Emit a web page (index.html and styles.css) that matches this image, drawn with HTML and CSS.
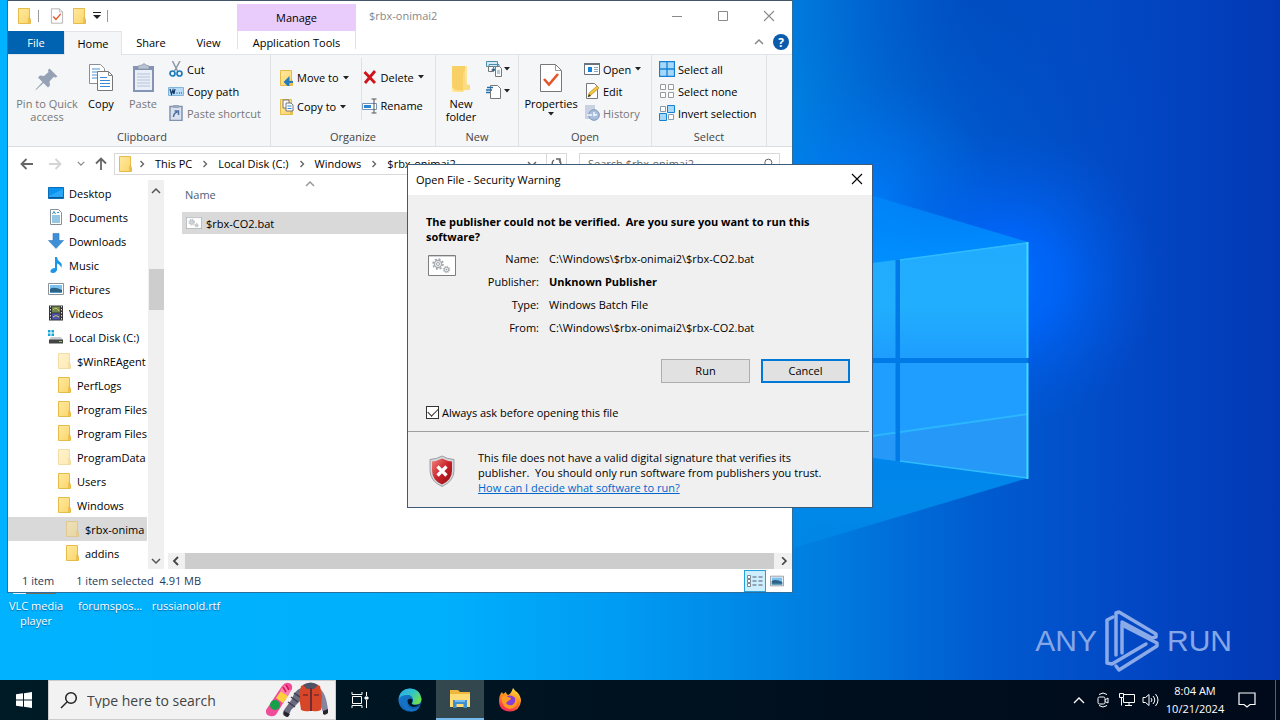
FILE: index.html
```html
<!DOCTYPE html>
<html lang="en">
<head>
<meta charset="utf-8">
<title>$rbx-onimai2</title>
<link rel="stylesheet" href="styles.css">
</head>
<body>
<svg class="defs" aria-hidden="true">
  <defs>
    <linearGradient id="gFolder" x1="0" y1="0" x2="1" y2="1"><stop offset="0" stop-color="#ffeaa0"/><stop offset="1" stop-color="#fbd468"/></linearGradient>
    <linearGradient id="gShield" x1="0" y1="0" x2="1" y2="1"><stop offset="0" stop-color="#f0837b"/><stop offset=".5" stop-color="#c9222a"/><stop offset="1" stop-color="#8d0f14"/></linearGradient>
    <linearGradient id="gEdge" x1="0" y1="0" x2="1" y2=".6"><stop offset="0" stop-color="#2aa8e8"/><stop offset=".55" stop-color="#32c4c8"/><stop offset="1" stop-color="#6adf52"/></linearGradient>
    <linearGradient id="gEdgeB" x1="0" y1="0" x2="1" y2="1"><stop offset="0" stop-color="#1b86dc"/><stop offset="1" stop-color="#0b4b9c"/></linearGradient>
    <linearGradient id="gFox" x1=".7" y1="0" x2=".3" y2="1"><stop offset="0" stop-color="#ffe13c"/><stop offset=".45" stop-color="#ff8a1e"/><stop offset="1" stop-color="#f5245c"/></linearGradient>
    <symbol id="folder" viewBox="0 0 16 16"><path d="M2.500.5h11v9.500l1 1.500v4h-12z" fill="url(#gFolder)" stroke="#e6bb4a"/><path d="M13 9.500v5.500" stroke="#d9a93a" fill="none"/></symbol>
    <symbol id="chev-r" viewBox="0 0 8 8"><path d="M2.500 1l3 3-3 3" fill="none" stroke="currentColor" stroke-width="1.400"/></symbol>
    <symbol id="chev-u" viewBox="0 0 10 8"><path d="M1 6l4-4 4 4" fill="none" stroke="currentColor" stroke-width="1.500"/></symbol>
    <symbol id="chev-d" viewBox="0 0 10 8"><path d="M1 2l4 4 4-4" fill="none" stroke="currentColor" stroke-width="1.500"/></symbol>
    <symbol id="chev-l" viewBox="0 0 8 10"><path d="M6 1L2 5l4 4" fill="none" stroke="currentColor" stroke-width="1.800"/></symbol>
    <symbol id="drop" viewBox="0 0 6 4"><path d="M0 0h6L3 3.500z" fill="#222"/></symbol>
    <symbol id="x" viewBox="0 0 12 12"><path d="M1 1l10 10M11 1L1 11" fill="none" stroke="currentColor" stroke-width="1.100"/></symbol>
    <symbol id="check-doc" viewBox="0 0 24 30"><path d="M1.500 1.500h15l6 6v21h-21z" fill="#fff" stroke="#777"/><path d="M16.500 1.500v6h6" fill="none" stroke="#999"/><path d="M5 16l5 5.500L19 11" fill="none" stroke="#e2562a" stroke-width="2.600"/></symbol>
    <symbol id="pin" viewBox="0 0 32 32"><path d="M18.500 5.500l8 8-2 1-2-.5-4 4.500.5 4-2 2-4.500-4.500L5 27l-.500-.500 7-7.500L7 14.500l2-2 4 .5 4.500-4-.5-2z" fill="#95a2b6"/></symbol>
    <symbol id="copy" viewBox="0 0 32 32"><path d="M4.500 1.500h11l4 4v15h-15z" fill="#fff" stroke="#8a8f96"/><path d="M7 6h8M7 9h10M7 12h10M7 15h10" stroke="#4d94dc" stroke-width="1.200"/><path d="M12.500 8.500h11l4 4v15h-15z" fill="#fff" stroke="#777"/><path d="M23.500 8.500v4h4" fill="none" stroke="#888"/><path d="M15 14.500h7M15 17.500h10M15 20.500h10M15 23.500h10" stroke="#3a86d8" stroke-width="1.200"/></symbol>
    <symbol id="paste" viewBox="0 0 32 32"><path d="M6 3h21v26H6z" fill="#8494b4"/><path d="M8 7h17v20H8z" fill="#e9eef7"/><path d="M10 11h13M10 14h13M10 17h13M10 20h13M10 23h13" stroke="#b5c1d8"/><path d="M11 6V3l4-1q2-3 4 0l3 1v3z" fill="#b9c2d2" stroke="#8792a8" stroke-width=".7"/></symbol>
    <symbol id="cut" viewBox="0 0 16 16"><path d="M4.500 0L10 11M12 0L6 11" stroke="#8a98a8" stroke-width="1.500"/><circle cx="4.500" cy="12.500" r="2.500" fill="none" stroke="#1c7dbd" stroke-width="1.700"/><circle cx="11.500" cy="12.500" r="2.500" fill="none" stroke="#1c7dbd" stroke-width="1.700"/></symbol>
    <symbol id="path" viewBox="0 0 16 16"><path d="M.5 4.500h15v8H.5z" fill="#b9dcf6" stroke="#7fb4dc"/><path d="M2 6l1.500 5L5 7l1 4L7 6M8.500 10h1M11 10h1M13 10h1" stroke="#123a66" stroke-width="1.200" fill="none"/></symbol>
    <symbol id="pshort" viewBox="0 0 16 16"><path d="M2 1.500h12v14H2z" fill="#d9e1ef" stroke="#8292b0" stroke-width="1.500"/><path d="M5 0h6v3H5z" fill="#9aa6bc"/><path d="M5.500 12q0-4 4-5M6.500 6h4v4" fill="none" stroke="#5370a4" stroke-width="1.500"/></symbol>
    <symbol id="moveto" viewBox="0 0 16 16"><use href="#folder"/><path d="M15 12H8M10.500 8.500L7 12l3.500 3.500z" stroke="#237cbf" stroke-width="2" fill="#237cbf"/></symbol>
    <symbol id="copyto" viewBox="0 0 16 16"><use href="#folder"/><path d="M5 1h6v8H5z" fill="#fff" stroke="#777"/><path d="M8 4h5l2 2v6H8z" fill="#fff" stroke="#777"/><path d="M9.500 7h4M9.500 9.500h4" stroke="#3a86d8"/></symbol>
    <symbol id="delete" viewBox="0 0 16 16"><path d="M2.500 3L13 14M13 2L3 14" stroke="#d0141c" stroke-width="2.800"/></symbol>
    <symbol id="rename" viewBox="0 0 16 16"><path d="M.5 5.500h14v6H.5z" fill="#fff" stroke="#7895b4"/><path d="M2 7h7v3H2z" fill="#2b85d0"/><path d="M9.500 1h5M9.500 15h5M12 1v14" stroke="#555"/></symbol>
    <symbol id="newfolder" viewBox="0 0 32 32"><path d="M7 3h15v22l-4 4H7z" fill="#ffe69a"/><path d="M7 3h13v5q0 2-2 3v17l-8-1-3-3z" fill="#f8d066"/><path d="M20 7l1 14 4 1v5H10l8 2V11z" fill="#fbdc82"/></symbol>
    <symbol id="newitem" viewBox="0 0 16 16"><path d="M.5.5h11v5H.5zM3 3.500h10v6H3z" fill="#d8ecf8" stroke="#4c8cab"/><path d="M2.500 5.500h5v5h-5zM9.500 5.500h4l2 2v8h-6z" fill="#f9f9f9" stroke="#777"/><path d="M6 10V8h4M11 10h3M11 12h3" stroke="#6a9cc4"/></symbol>
    <symbol id="easy" viewBox="0 0 16 16"><path d="M4.500 2.500h7l3 3v10h-10z" fill="#fff" stroke="#777"/><path d="M1 4.500h6M0 7h6M0 9.500h4" stroke="#236fae" stroke-width="1.400"/></symbol>
    <symbol id="open" viewBox="0 0 16 16"><path d="M.5 2.500h15v11H.5z" fill="#fff" stroke="#68717b"/><path d="M0 2h16v2H0z" fill="#69737e"/><path d="M4 6h4v5H4z" fill="#1682d8"/><path d="M10 6.500h4M10 8.500h4M10 10.500h4" stroke="#8aa9c0"/></symbol>
    <symbol id="edit" viewBox="0 0 16 16"><path d="M2.500.5h8l3 3v12h-11z" fill="#fff" stroke="#777"/><path d="M4 14l1-4 8-7 2 2-8 7z" fill="#f3c63a" stroke="#a58320" stroke-width=".6"/><path d="M4 14l1-3 2 2z" fill="#333"/></symbol>
    <symbol id="history" viewBox="0 0 16 16"><path d="M1 0h10v14H1z" fill="#c8d2e2"/><circle cx="10" cy="10" r="5.300" fill="#a9bddc" stroke="#7d94b8"/><path d="M10 7v3.500l3-1M3 10h5" fill="none" stroke="#f3f6fc" stroke-width="1.600"/></symbol>
    <symbol id="selall" viewBox="0 0 16 16"><path d="M.5.5h15v15H.5zM8 .5v15M.5 8h15" fill="#a6d8fa" stroke="#1581d4" stroke-width="1.300"/></symbol>
    <symbol id="selnone" viewBox="0 0 16 16"><path d="M1.500 1.500h5v5h-5zM9.500 1.500h5v5h-5zM1.500 9.500h5v5h-5zM9.500 9.500h5v5h-5z" fill="#fff" stroke="#9a9a9a"/></symbol>
    <symbol id="selinv" viewBox="0 0 16 16"><path d="M1.500 1.500h5v5h-5zM9.500 9.500h5v5h-5z" fill="#fff" stroke="#8a9aa8"/><path d="M8.500.5h7v7h-7zM.5 8.500h7v7h-7z" fill="#a6d8fa" stroke="#1581d4"/></symbol>
    <symbol id="desktop" viewBox="0 0 16 16"><path d="M.5 2.500h15v11H.5z" fill="#0a93ee" stroke="#0b6cb8"/><path d="M1 11l14-7v9H1z" fill="#2aa7f8"/><path d="M1 12.500h14" stroke="#0a5590"/></symbol>
    <symbol id="document" viewBox="0 0 16 16"><path d="M2.500.5h8l3 3v12h-11z" fill="#fff" stroke="#8a8f94"/><path d="M4.500 5L6 2.500 7.500 5M9 3.500h2M4 7h8M4 9h8M4 11h8M4 13h8" stroke="#2b8ec4" fill="none"/></symbol>
    <symbol id="download" viewBox="0 0 16 16"><path d="M5 .5h6v7h4.500L8 15.500.5 7.500H5z" fill="#3f8fd8" stroke="#2e79bf" stroke-width=".6"/></symbol>
    <symbol id="music" viewBox="0 0 16 16"><path d="M7 0h2q0 3 3 5t1 6q0-3-4-4.500V13q-1 3-4 3t-2.500-2.500Q3.500 11 7 11z" fill="#1c96e8"/></symbol>
    <symbol id="picture" viewBox="0 0 16 16"><path d="M.5 2.500h15v11H.5z" fill="#fff" stroke="#8b9299"/><path d="M2 4h12v8H2z" fill="#7cc1ee"/><path d="M2 8q4-3 12 1v3H2z" fill="#2c6286"/><path d="M2 11h12v1H2z" fill="#5699bd"/></symbol>
    <symbol id="video" viewBox="0 0 16 16"><path d="M1 .5h14v15H1z" fill="#333"/><path d="M4 1.500h8v6H4z" fill="#6f8752"/><path d="M4 8.500h8v6H4z" fill="#4c55ae"/><path d="M5 5q3-4 6 1M5 12q3-3 6 0" stroke="#dfc85a" fill="none"/><path d="M2.500 1v15M13.500 1v15" stroke="#ddd" stroke-dasharray="1.500 1.500"/></symbol>
    <symbol id="disk" viewBox="0 0 16 16"><path d="M0 1h2.500v2.500H0zM3.500 1H6v2.500H3.500zM0 4.500h2.500V7H0zM3.500 4.500H6V7H3.500z" fill="#17a5d8"/><path d="M3 8h10l2 3H1z" fill="#c9cccf"/><path d="M1 10.500h14v4H1z" fill="#444"/><path d="M11 12.500h3" stroke="#6fd04a"/></symbol>
    <symbol id="bat" viewBox="0 0 28 21"><path d="M.5.5h27v20H.5z" fill="#fff" stroke="#7c7f82"/><path d="M1 1h26v1H1z" fill="#cfd2d5"/><circle cx="10" cy="9" r="3.600" fill="#eee" stroke="#a0a7ad" stroke-width="1.200"/><circle cx="10" cy="9" r="5" fill="none" stroke="#a0a7ad" stroke-width="1.500" stroke-dasharray="2 1.930"/><circle cx="10" cy="9" r="1.500" fill="#fff" stroke="#a0a7ad"/><circle cx="18.500" cy="14.500" r="2.300" fill="#eee" stroke="#a0a7ad"/><circle cx="18.500" cy="14.500" r="3.200" fill="none" stroke="#a0a7ad" stroke-dasharray="1.300 1.200"/><circle cx="18.500" cy="14.500" r=".8" fill="#8f969c"/></symbol>
    <symbol id="details" viewBox="0 0 18 14"><path d="M1.500 1.500h3v3h-3zM1.500 5.500h3v3h-3zM1.500 9.500h3v3h-3z" fill="#fff" stroke="#7d8790"/><path d="M6.500 3h4M12.500 3h4M6.500 7h4M12.500 7h4M6.500 11h4M12.500 11h4" stroke="#555f68"/></symbol>
    <symbol id="mag" viewBox="0 0 18 18"><circle cx="11" cy="7" r="5.300" fill="none" stroke="currentColor" stroke-width="1.500"/><path d="M7 11L1 17" stroke="currentColor" stroke-width="1.500"/></symbol>
    <symbol id="shield" viewBox="0 0 28 32"><path d="M14 1q5 3 12 3.500v11Q26 26 14 31.500 2 26 2 15.500v-11Q9 4 14 1z" fill="#d5d8db" stroke="#888e94" stroke-width=".8"/><path d="M14 3.500q5 2.500 10 3v9Q24 25 14 29.500 4 25 4 15.500v-9q5-.5 10-3z" fill="url(#gShield)"/><path d="M9.500 11.500l9 9M18.500 11.500l-9 9" stroke="#fff" stroke-width="3.200"/></symbol>
  </defs>
</svg>

<main class="desktop">
  <svg class="wallpaper" viewBox="0 0 1280 680" preserveAspectRatio="xMidYMid slice" aria-hidden="true">
    <defs>
      <linearGradient id="wBase" gradientUnits="userSpaceOnUse" x1="0" y1="0" x2="1280" y2="0"><stop offset="0" stop-color="#00b2ff"/><stop offset=".34" stop-color="#00b0fd"/><stop offset=".48" stop-color="#009cf3"/><stop offset=".64" stop-color="#007ee0"/><stop offset=".77" stop-color="#005bd0"/><stop offset=".88" stop-color="#0248c5"/><stop offset="1" stop-color="#0338b4"/></linearGradient>
      <radialGradient id="wGlow" gradientUnits="userSpaceOnUse" cx="1010" cy="280" r="150"><stop offset="0" stop-color="#006cff"/><stop offset=".35" stop-color="#0066fc" stop-opacity=".8"/><stop offset="1" stop-color="#0058e0" stop-opacity="0"/></radialGradient>
      <radialGradient id="wHaze" gradientUnits="userSpaceOnUse" cx="870" cy="210" r="130"><stop offset="0" stop-color="#007cff" stop-opacity=".8"/><stop offset="1" stop-color="#006cf0" stop-opacity="0"/></radialGradient>
      <radialGradient id="wDark" gradientUnits="userSpaceOnUse" cx="970" cy="0" r="220"><stop offset="0" stop-color="#0040b4" stop-opacity=".55"/><stop offset="1" stop-color="#0040b4" stop-opacity="0"/></radialGradient>
      <linearGradient id="wPane" x1="0" y1="0" x2="0" y2="1"><stop offset="0" stop-color="#22abff"/><stop offset=".55" stop-color="#21aefd"/><stop offset="1" stop-color="#1e9eff"/></linearGradient>
      <linearGradient id="wBeam" gradientUnits="userSpaceOnUse" x1="0" y1="168" x2="0" y2="552"><stop offset="0" stop-color="#0088f8" stop-opacity=".5"/><stop offset=".25" stop-color="#0090ff"/><stop offset=".75" stop-color="#0085ec"/><stop offset=".9" stop-color="#0088e8"/><stop offset="1" stop-color="#008ae6" stop-opacity=".6"/></linearGradient>
    </defs>
    <rect width="1280" height="680" fill="url(#wBase)"/>
    <rect width="1280" height="680" fill="url(#wDark)"/>
    <rect width="1280" height="680" fill="url(#wHaze)"/>
    <rect width="1280" height="680" fill="url(#wGlow)"/>
    <path d="M780 168L1028 242V478L780 552z" fill="url(#wBeam)"/>
    <path d="M790 273l106-13v98H790zM900 260l128-18v116H900z" fill="url(#wPane)"/>
    <path d="M790 363h106v98l-106-14zM900 363h128v115l-128-17z" fill="#209eff"/>
    <path d="M790 448l238-35v65l-128-17-110-14z" fill="#2796f6" opacity=".8"/>
    <path d="M872 436l156-22" stroke="#2bb6ff" stroke-width="2"/>
    <path d="M900 260l128-17M1028 478l-128-17" fill="none" stroke="#2fbcff" stroke-width="1.500"/>
    <path d="M1027.500 242v116M1027.500 363v116" fill="none" stroke="#3fdcff" stroke-width="2"/>
    <path d="M895.500 260h4.500v201h-4.500zM790 358h238v5H790z" fill="#007ae6"/>
    <path d="M13 590h13v4H13z" fill="#e8eef2"/><path d="M26 590h30v4H26z" fill="#7a6a55"/>
  </svg>

  <ul class="shortcuts">
    <li>VLC media player</li><li>forumspos...</li><li>russianold.rtf</li>
  </ul>

  <div class="anyrun" aria-label="ANY.RUN">
    <span>ANY</span>
    <svg width="54" height="62" viewBox="0 0 54 62" fill="none" stroke="#8aaae8" stroke-width="3.500" stroke-linejoin="round" stroke-linecap="round" aria-hidden="true"><path d="M8 7L2 10v43l5 1 34-20"/><path d="M11 45V3l3-1 37 22v3l-4 1L17 12"/><path d="M17 14v29"/><path d="M11 56l3 4 38-24v-3L19 16"/></svg>
    <span>RUN</span>
  </div>

  <section class="window explorer" aria-label="$rbx-onimai2">
    <header class="caption">
      <div class="quick">
        <svg class="i16"><use href="#folder"/></svg><i class="tick"></i>
        <svg class="i16"><use href="#check-doc"/></svg>
        <svg class="i16"><use href="#folder"/></svg>
        <svg width="8" height="8" viewBox="0 0 8 8"><path d="M0 .5h8" stroke="#222"/><path d="M0 3h8L4 7z" fill="#222"/></svg><i class="tick"></i>
      </div>
      <div class="manage">Manage</div>
      <h1 class="title">$rbx-onimai2</h1>
      <div class="winbtns">
        <button aria-label="Minimize"><svg width="12" height="12"><path d="M1 6.500h10" stroke="#8a8a8a"/></svg></button>
        <button aria-label="Maximize"><svg width="12" height="12"><path d="M1.500 1.500h9v9h-9z" fill="none" stroke="#8a8a8a"/></svg></button>
        <button aria-label="Close"><svg width="12" height="12"><use href="#x"/></svg></button>
      </div>
    </header>
    <nav class="tabs">
      <button class="tab file">File</button><button class="tab home">Home</button><button class="tab share">Share</button><button class="tab view">View</button><button class="tab apptools">Application Tools</button>
      <div class="help"><svg width="10" height="8"><use href="#chev-u"/></svg><button class="q" aria-label="Help">?</button></div>
    </nav>
    <div class="ribbon">
      <div class="group clipboard">
        <div class="tools">
          <button class="big pinb off"><svg class="i32"><use href="#pin"/></svg>Pin to Quick access</button>
          <button class="big"><svg class="i32"><use href="#copy"/></svg>Copy</button>
          <button class="big off"><svg class="i32"><use href="#paste"/></svg>Paste</button>
          <div class="rows">
            <button class="small"><svg class="i16"><use href="#cut"/></svg>Cut</button>
            <button class="small"><svg class="i16"><use href="#path"/></svg>Copy path</button>
            <button class="small off"><svg class="i16"><use href="#pshort"/></svg>Paste shortcut</button>
          </div>
        </div>
        <div class="glabel">Clipboard</div>
      </div>
      <div class="group organize">
        <div class="tools">
          <div class="rows tall">
            <button class="small"><svg class="i16"><use href="#moveto"/></svg>Move to<svg class="dd"><use href="#drop"/></svg></button>
            <button class="small"><svg class="i16"><use href="#copyto"/></svg>Copy to<svg class="dd"><use href="#drop"/></svg></button>
          </div>
          <div class="rows tall split">
            <button class="small"><svg class="i16"><use href="#delete"/></svg>Delete<svg class="dd"><use href="#drop"/></svg></button>
            <button class="small"><svg class="i16"><use href="#rename"/></svg>Rename</button>
          </div>
        </div>
        <div class="glabel">Organize</div>
      </div>
      <div class="group new">
        <div class="tools">
          <button class="big"><svg class="i32"><use href="#newfolder"/></svg>New folder</button>
          <div class="rows">
            <button class="small" aria-label="New item"><svg class="i16"><use href="#newitem"/></svg><svg class="dd"><use href="#drop"/></svg></button>
            <button class="small" aria-label="Easy access"><svg class="i16"><use href="#easy"/></svg><svg class="dd"><use href="#drop"/></svg></button>
          </div>
        </div>
        <div class="glabel">New</div>
      </div>
      <div class="group opens">
        <div class="tools">
          <button class="big props"><svg class="i32 doc"><use href="#check-doc"/></svg>Properties<svg class="dd"><use href="#drop"/></svg></button>
          <div class="rows">
            <button class="small"><svg class="i16"><use href="#open"/></svg>Open<svg class="dd"><use href="#drop"/></svg></button>
            <button class="small"><svg class="i16"><use href="#edit"/></svg>Edit</button>
            <button class="small off"><svg class="i16"><use href="#history"/></svg>History</button>
          </div>
        </div>
        <div class="glabel">Open</div>
      </div>
      <div class="group select">
        <div class="tools">
          <div class="rows">
            <button class="small"><svg class="i16"><use href="#selall"/></svg>Select all</button>
            <button class="small"><svg class="i16"><use href="#selnone"/></svg>Select none</button>
            <button class="small"><svg class="i16"><use href="#selinv"/></svg>Invert selection</button>
          </div>
        </div>
        <div class="glabel">Select</div>
      </div>
    </div>
    <div class="address">
      <div class="arrows">
        <svg width="14" height="12" viewBox="0 0 14 12" fill="none" stroke="#666" stroke-width="1.800"><path d="M13 6H2M6.500 1L1.500 6l5 5"/></svg>
        <svg width="14" height="12" viewBox="0 0 14 12" fill="none" stroke="#d4d4d4" stroke-width="1.800"><path d="M1 6h11M7.500 1l5 5-5 5"/></svg>
        <svg class="recent" width="8" height="7"><use href="#chev-d"/></svg>
        <svg width="12" height="14" viewBox="0 0 12 14" fill="none" stroke="#666" stroke-width="1.800"><path d="M6 13V2M1 6.500l5-5 5 5"/></svg>
      </div>
      <div class="crumbs">
        <svg class="i16"><use href="#folder"/></svg>
        <svg class="i8"><use href="#chev-r"/></svg><span>This PC</span>
        <svg class="i8"><use href="#chev-r"/></svg><span>Local Disk (C:)</span>
        <svg class="i8"><use href="#chev-r"/></svg><span>Windows</span>
        <svg class="i8"><use href="#chev-r"/></svg><span>$rbx-onimai2</span>
        <svg class="cend" width="10" height="8"><use href="#chev-d"/></svg>
        <span class="refresh"><svg width="11" height="11" viewBox="0 0 11 11" fill="none" stroke="#666" stroke-width="1.500"><path d="M3 2a4.300 4.300 0 1 0 5 0M5 1h4v4"/></svg></span>
      </div>
      <label class="search"><input type="text" placeholder="Search $rbx-onimai2" aria-label="Search $rbx-onimai2"><svg width="12" height="12"><use href="#mag"/></svg></label>
    </div>
    <div class="body">
      <ul class="tree">
        <li><svg class="i16"><use href="#desktop"/></svg>Desktop</li>
        <li><svg class="i16"><use href="#document"/></svg>Documents</li>
        <li><svg class="i16"><use href="#download"/></svg>Downloads</li>
        <li><svg class="i16"><use href="#music"/></svg>Music</li>
        <li><svg class="i16"><use href="#picture"/></svg>Pictures</li>
        <li><svg class="i16"><use href="#video"/></svg>Videos</li>
        <li><svg class="i16"><use href="#disk"/></svg>Local Disk (C:)</li>
        <li class="l1 faint"><svg class="i16"><use href="#folder"/></svg>$WinREAgent</li>
        <li class="l1"><svg class="i16"><use href="#folder"/></svg>PerfLogs</li>
        <li class="l1"><svg class="i16"><use href="#folder"/></svg>Program Files</li>
        <li class="l1"><svg class="i16"><use href="#folder"/></svg>Program Files</li>
        <li class="l1 faint"><svg class="i16"><use href="#folder"/></svg>ProgramData</li>
        <li class="l1"><svg class="i16"><use href="#folder"/></svg>Users</li>
        <li class="l1"><svg class="i16"><use href="#folder"/></svg>Windows</li>
        <li class="l2 faint sel"><svg class="i16"><use href="#folder"/></svg>$rbx-onima</li>
        <li class="l2"><svg class="i16"><use href="#folder"/></svg>addins</li>
      </ul>
      <div class="vscroll"><svg width="10" height="8"><use href="#chev-u"/></svg><i class="vthumb"></i><svg width="10" height="8"><use href="#chev-d"/></svg></div>
      <div class="files">
        <table>
          <thead><tr><th>Name<svg class="sort" width="10" height="8"><use href="#chev-u"/></svg></th></tr></thead>
          <tbody><tr><td><span class="fname"><svg width="16" height="12"><use href="#bat"/></svg>$rbx-CO2.bat</span></td></tr></tbody>
        </table>
        <div class="hscroll"><svg width="8" height="10"><use href="#chev-l"/></svg><i class="hthumb"></i><svg width="10" height="10"><use href="#chev-r"/></svg></div>
      </div>
    </div>
    <footer class="status"><span>1 item</span><span>1 item selected&nbsp; 4.91 MB</span>
      <div class="views"><button class="on" aria-label="Details"><svg width="18" height="14"><use href="#details"/></svg></button><button aria-label="Large icons"><svg width="14" height="14"><use href="#picture"/></svg></button></div>
    </footer>
  </section>

  <section class="window dialog" role="dialog" aria-labelledby="dt">
    <header class="dhead"><h2 id="dt">Open File - Security Warning</h2><button aria-label="Close"><svg width="12" height="12"><use href="#x"/></svg></button></header>
    <div class="dmain">
      <p class="lead">The publisher could not be verified.&nbsp; Are you sure you want to run this software?</p>
      <div class="info">
        <svg width="28" height="21"><use href="#bat"/></svg>
        <dl><dt>Name:</dt><dd>C:\Windows\$rbx-onimai2\$rbx-CO2.bat</dd><dt>Publisher:</dt><dd><b>Unknown Publisher</b></dd><dt>Type:</dt><dd>Windows Batch File</dd><dt>From:</dt><dd>C:\Windows\$rbx-onimai2\$rbx-CO2.bat</dd></dl>
      </div>
      <div class="actions"><button>Run</button><button class="primary">Cancel</button></div>
      <label class="ask"><input type="checkbox" checked>Always ask before opening this file</label>
    </div>
    <div class="dfoot">
      <svg width="28" height="32"><use href="#shield"/></svg>
      <p>This file does not have a valid digital signature that verifies its<br>publisher.&nbsp; You should only run software from publishers you trust.<br><a href="#">How can I decide what software to run?</a></p>
    </div>
  </section>
</main>

<footer class="taskbar">
  <button class="tb" aria-label="Start"><svg width="16" height="16" fill="#fff"><path d="M0 2.300L7 1.300V7.500H0zM8 1.200L16 0v7.500H8zM0 8.500h7v6.200L0 13.700zM8 8.500h8V16l-8-1.200z"/></svg></button>
  <label class="tsearch"><svg width="18" height="18"><use href="#mag"/></svg><input type="text" placeholder="Type here to search" aria-label="Type here to search">
    <svg class="art" width="64" height="36" viewBox="0 0 64 36" aria-hidden="true"><path d="M1 28L17 4q3-4 7-3t3 6L12 31q-2 4-7 3t-4-6z" fill="#ef4c9a"/><path d="M11 16l5-7 7 5-5 7z" fill="#ffcf3f"/><path d="M15 9l4-6 7 5-3 6z" fill="#ff7fb0"/><circle cx="10" cy="23" r="5" fill="#16a04a"/><path d="M18 5l3 5M21 3l3 5" stroke="#d4145a" stroke-width="1.500"/><path d="M36 6q-7 3-9 11l-8 11q-3 5 1 6 4 0 6-6l10-10z" fill="#6b6b80"/><path d="M54 6q7 4 9 22l-5 2-5-12z" fill="#8585a0"/><path d="M36 4q9-6 19 0l2 10-1 14q-4 2-8 1h-3q-5 1-9-1l-2-14z" fill="#d84628"/><path d="M38 3q8-5 15 0l-4 4h-7z" fill="#4f5366"/><path d="M46 6v23" stroke="#6f2a33" stroke-width="2"/><path d="M38 13h5M49 13h5" stroke="#7c2a2a" stroke-width="1.500"/><path d="M26 15l7 5M23 20l7 5M29 11l6 4" stroke="#3c3c4a" stroke-width="1.500"/><path d="M58 29l5-2v4q-3 3-5 1zM19 29l6 3-2 3q-5 0-4-6z" fill="#26242c"/></svg>
  </label>
  <div class="apps">
    <button class="tb" aria-label="Task view"><svg width="18" height="16" fill="none" stroke="#fff"><path d="M1 0v2.500h10V0M1.500 4.500h9v7h-9zM1 16v-2.500h10V16M15.500 0v4M15.500 8v8"/><path d="M14 5h3v2h-3z" fill="#fff"/></svg></button>
    <button class="tb" aria-label="Edge"><svg width="24" height="24" viewBox="0 0 24 24"><circle cx="12" cy="12" r="11.500" fill="url(#gEdgeB)"/><path d="M.6 11Q2 .5 12 .5T23.500 11q0 5.500-6 5.500-3.500 0-3.500-1.500 1-1 1-3Q14.500 7 9 7 3 7 .6 11z" fill="url(#gEdge)"/><path d="M9 12q-1.500 8 6 9 4 0 7-3-2 5.500-9 5.500Q4 21 4 14q0-5 5-7 5 0 6 5 0 2-1 3-2-4-5-3z" fill="#1673c4"/><path d="M9.500 12q3-3 5 0 0 2-1 3 0 2 4 2 3 0 5-1-3 3-7 3-6-1-6-7z" fill="#001621"/></svg></button>
    <button class="tb active" aria-label="File Explorer"><svg width="24" height="24" viewBox="0 0 24 24"><path d="M2 3h8l2 2h10v14H2z" fill="#f0b73a"/><path d="M2 7h20v13H2z" fill="#ffdb76"/><path d="M5 21v-8h14v8h-3.500v-4h-7v4z" fill="#3f8fd0"/><path d="M7 13h10v2H7z" fill="#74bcf0"/></svg></button>
    <button class="tb" aria-label="Firefox"><svg width="24" height="24" viewBox="0 0 24 24"><path d="M15 0q2 3 4 4 4 4 4 9-1 10-11 10.500Q1 23 1 13 1 7 4 4l1 2 3-2q0 2 2 3 3-1 5-7z" fill="url(#gFox)"/><circle cx="12" cy="13.500" r="6" fill="#8a3fd4"/><path d="M3 9q4-2 7 0l3 1q0 2-3 3l-2 2q2 3 6 2 4-2 3-7 2 1 2 5-1 5-7 6-8-1-9-12z" fill="#ff9a22"/></svg></button>
  </div>
  <div class="tray">
    <button class="ti" aria-label="Show hidden icons"><svg width="12" height="8" fill="none" stroke="#fff" stroke-width="1.300"><path d="M1 7l5-5 5 5"/></svg></button>
    <button class="ti" aria-label="Meet now"><svg width="12" height="16" fill="none" stroke="#fff"><path d="M2 2.500q4-3 8 0M2 13.500q4 3 8 0"/><rect x="1" y="5" width="7" height="7" rx="1.500"/><path d="M8 8l3-2v5L8 9.500"/></svg></button>
    <button class="ti" aria-label="Network"><svg width="16" height="14" fill="none" stroke="#fff"><path d="M5 1.500h10.500v8H4.500V5M.5.5h4v4h-4zM2.500 4.500v8M10 9.500v3M6 12.500h7"/></svg></button>
    <button class="ti" aria-label="Volume"><svg width="18" height="14" fill="none" stroke="#fff"><path d="M1 4.500h2.500L7 1.500v11l-3.500-3H1zM9 5q2 2 0 4M11 3q3.500 4 0 8M13.500 1q5 6 0 12"/></svg></button>
    <div class="clock"><span>8:04 AM</span><span>10/21/2024</span></div>
    <button class="note" aria-label="Notifications"><svg width="18" height="16" fill="none" stroke="#fff" stroke-width="1.200"><path d="M1 1h16v11.500h-5L9 15l-3-2.500H1z"/></svg></button>
    <i class="peek"></i>
  </div>
</footer>
</body>
</html>
```
FILE: styles.css
```css
* { box-sizing: border-box; }
body { margin: 0; height: 100vh; display: flex; flex-direction: column; overflow: hidden; font: 11px/15px "Open Sans", "Noto Sans", sans-serif; color: #000; }
button, input { font: inherit; color: inherit; margin: 0; padding: 0; border: 0; background: none; }
ul, dl, dd, p, h1, h2 { margin: 0; padding: 0; list-style: none; font-size: 11px; font-weight: 400; }
svg { flex: none; display: block; }
.defs { position: absolute; width: 0; height: 0; }
.i32 { width: 32px; height: 32px; }
.i16 { width: 16px; height: 16px; }
.i8 { width: 8px; height: 8px; }
.dd { width: 6px; height: 4px; }

.desktop { flex: 1; position: relative; min-height: 0; overflow: hidden; background: #0084e6; }
.wallpaper { position: absolute; inset: 0; width: 100%; height: 100%; }
.shortcuts { position: absolute; left: 0; top: 598px; display: flex; gap: 2px; color: #fff; text-align: center; }
.shortcuts li { width: 72px; padding: 0 4px; text-shadow: 0 1px 1px #0067a8; }
.shortcuts li:last-child { width: 76px; padding: 0; }
.anyrun { position: absolute; right: 48px; bottom: 7px; display: flex; align-items: center; gap: 8px; color: #86a7e6; font: 30px/64px "Liberation Sans Narrow", "Liberation Sans", sans-serif; }

.window { position: absolute; display: flex; flex-direction: column; }
.explorer { left: 7px; top: 0; width: 786px; height: 593px; background: #fff; border: 1px solid #2c6f9c; border-top-color: #44546a; }
.caption { height: 30px; display: flex; align-items: stretch; }
.quick { width: 229px; display: flex; align-items: center; gap: 6px; padding: 0 0 1px 8px; }
.tick { width: 1px; height: 12px; background: #999; margin-right: 4px; }
.manage { width: 119px; margin-top: 3px; padding-top: 6px; background: #e9ccfb; text-align: center; }
.title { flex: 1; padding: 7px 13px; color: #888; }
.winbtns { display: flex; color: #8a8a8a; padding-bottom: 1px; }
.winbtns button { width: 46px; display: grid; place-items: center; }

.tabs { height: 24px; display: flex; border-bottom: 1px solid #e1e4e8; }
.tab { height: 23px; }
.file { width: 56px; background: #0063b1; color: #fff; }
.home { width: 58px; height: 24px; padding-bottom: 1px; background: #f5f6f7; border: 1px solid #e1e4e8; border-bottom: 0; }
.share { width: 58px; }
.view { width: 57px; }
.apptools { width: 119px; height: 18px; padding-top: 4px; border: solid #e6dcee; border-width: 0 1px; white-space: nowrap; }
.help { margin-left: auto; display: flex; align-items: center; gap: 9px; padding: 0 3px 1px 0; color: #888; }
.q { width: 16px; height: 16px; border-radius: 50%; background: #0a5bab; color: #fff; font-weight: 700; font-size: 12px; }

.ribbon { height: 92px; display: flex; background: #f5f6f7; border-bottom: 1px solid #dcdddf; }
.group { display: flex; flex-direction: column; border-right: 1px solid #e0e1e3; white-space: nowrap; }
.tools { flex: 1; display: flex; padding-top: 3px; }
.glabel { text-align: center; height: 17px; color: #444; }
.clipboard { width: 263px; padding-left: 6px; }
.organize { width: 165px; }
.new { width: 83px; }
.opens { width: 133px; }
.select { width: 115px; }
.big { width: 42px; display: flex; flex-direction: column; align-items: center; align-self: flex-start; gap: 2px; padding-top: 5px; line-height: 13px; white-space: normal; }
.pinb { width: 66px; }
.off { color: #777; }
.rows { display: flex; flex-direction: column; padding-left: 4px; }
.small { height: 22px; display: flex; align-items: center; gap: 3px; }
.small .dd { margin-left: 1px; }
.tall { padding: 5px 0 0 7px; }
.tall .small { height: 29px; }
.split { margin-left: 12px; padding-left: 0; border-left: 1px solid #e0e1e3; height: 62px; }
.new .big { margin-left: 4px; }
.new .small { gap: 1px; }
.props { width: 58px; margin-left: 3px; }
.doc { height: 30px; margin-bottom: 2px; }
.select .rows { padding-left: 7px; }

.address { height: 33px; display: flex; align-items: center; padding: 0 12px; }
.arrows { width: 94px; display: flex; align-items: center; justify-content: space-between; padding-right: 7px; }
.recent { color: #888; margin: 0 -4px 0 0; }
.crumbs { flex: 1; height: 22px; display: flex; align-items: center; gap: 9px; border: 1px solid #d9d9d9; padding-left: 2px; color: #666; white-space: nowrap; }
.crumbs .i16 { margin-right: -4px; }
.crumbs span { color: #000; }
.cend { margin-left: auto; }
.refresh { height: 20px; display: flex; align-items: center; border-left: 1px solid #d9d9d9; padding: 0 4px; }
.search { width: 201px; height: 22px; margin-left: 12px; border: 1px solid #d9d9d9; display: flex; align-items: center; padding: 0 6px 0 8px; color: #666; }
.search input { flex: 1; min-width: 0; }
input::placeholder { color: #666; opacity: 1; }

.body { flex: 1; min-height: 0; display: flex; }
.tree { width: 139px; overflow: hidden; padding-top: 1px; }
.tree li { height: 24px; display: flex; align-items: center; gap: 5px; padding-left: 40px; white-space: nowrap; }
.tree .l1 { padding-left: 48px; }
.tree .l2 { padding-left: 56px; }
.faint svg { opacity: .5; }
.tree .sel { background: #d9d9d9; }
.vscroll { width: 17px; display: flex; flex-direction: column; align-items: center; justify-content: space-between; background: #f0f0f0; padding: 7px 0 4px; border-left: 1px solid #fff; color: #555; }
.vthumb { width: 15px; height: 41px; background: #cdcdcd; margin-bottom: 174px; }
.files { flex: 1; min-width: 0; display: flex; flex-direction: column; padding-left: 4px; }
table { width: 100%; border-collapse: collapse; }
th { position: relative; text-align: left; font-weight: 400; color: #4c607a; padding: 7px 17px 10px; height: 32px; }
.sort { position: absolute; left: 137px; top: 0; color: #999; }
td { padding: 0 0 0 14px; }
.fname { height: 22px; display: flex; align-items: center; gap: 4px; padding-left: 4px; background: #d9d9d9; }
.hscroll { height: 16px; margin-top: auto; display: flex; align-items: center; background: #f0f0f0; padding: 0 3px 0 4px; gap: 5px; color: #444; }
.hthumb { flex: 1; height: 16px; background: #cdcdcd; }
.status { height: 23px; display: flex; align-items: center; gap: 22px; padding-left: 14px; color: #1e395b; }
.views { margin-left: auto; display: flex; padding-right: 4px; }
.views button { width: 22px; height: 22px; display: grid; place-items: center; border: 1px solid transparent; }
.views .on { background: #cceeff; border-color: #26a0da; }

.dialog { left: 407px; top: 164px; width: 466px; height: 344px; background: #f0f0f0; border: 1px solid #3d5a78; }
.dhead { height: 30px; background: #fff; display: flex; justify-content: space-between; align-items: center; padding: 0 9px 2px 8px; }
.dmain { padding: 19px 22px 0 18px; height: 236px; display: flex; flex-direction: column; }
.lead { font-weight: 700; }
.info { display: flex; padding: 7px 0 0 2px; }
.info svg { margin-top: 4px; }
dl { flex: 1; display: grid; grid-template-columns: 83px 1fr; column-gap: 10px; row-gap: 8px; }
dt { text-align: right; }
.actions { display: flex; justify-content: flex-end; gap: 11px; padding-top: 24px; }
.actions button { width: 89px; height: 24px; padding-bottom: 2px; background: #e1e1e1; border: 1px solid #adadad; }
.actions .primary { border: 2px solid #0078d7; }
.ask { display: flex; align-items: center; gap: 3px; margin-top: 22px; }
.ask input { appearance: none; width: 13px; height: 13px; border: 1px solid #333; background: #fff; display: grid; place-items: center; }
.ask input:checked::after { content: ""; width: 9px; height: 5px; border: solid #333; border-width: 0 0 1px 1px; transform: rotate(-45deg); margin-top: -3px; }
.dfoot { flex: 1; margin-right: 3px; border-top: 1px solid #a0a0a0; display: flex; gap: 22px; padding: 18px 0 0 20px; }
.dfoot svg { margin-top: 5px; }
.dfoot a { color: #0066cc; }

.taskbar { height: 40px; flex: none; display: flex; background: linear-gradient(90deg, #001a26, #000a1a); color: #fff; }
.tb { width: 48px; height: 40px; display: grid; place-items: center; }
.tsearch { width: 288px; background: #f2f2f2; border: 1px solid #ccc; display: flex; align-items: center; padding: 0 6px 0 11px; gap: 9px; color: #222; }
.tsearch input { flex: 1; min-width: 0; font-size: 14px; }
.tsearch input::placeholder { color: #444; }
.apps { display: flex; gap: 2px; }
.active { background: #33474f; border-bottom: 2px solid #76b9ed; }
.tray { margin-left: auto; display: flex; align-items: center; }
.ti { width: 24px; height: 40px; display: grid; place-items: center; }
.clock { width: 64px; display: flex; flex-direction: column; text-align: center; line-height: 18px; }
.note { width: 40px; height: 40px; display: grid; place-items: center; }
.peek { width: 5px; height: 40px; border-left: 1px solid #56606c; margin-left: 8px; }
```
